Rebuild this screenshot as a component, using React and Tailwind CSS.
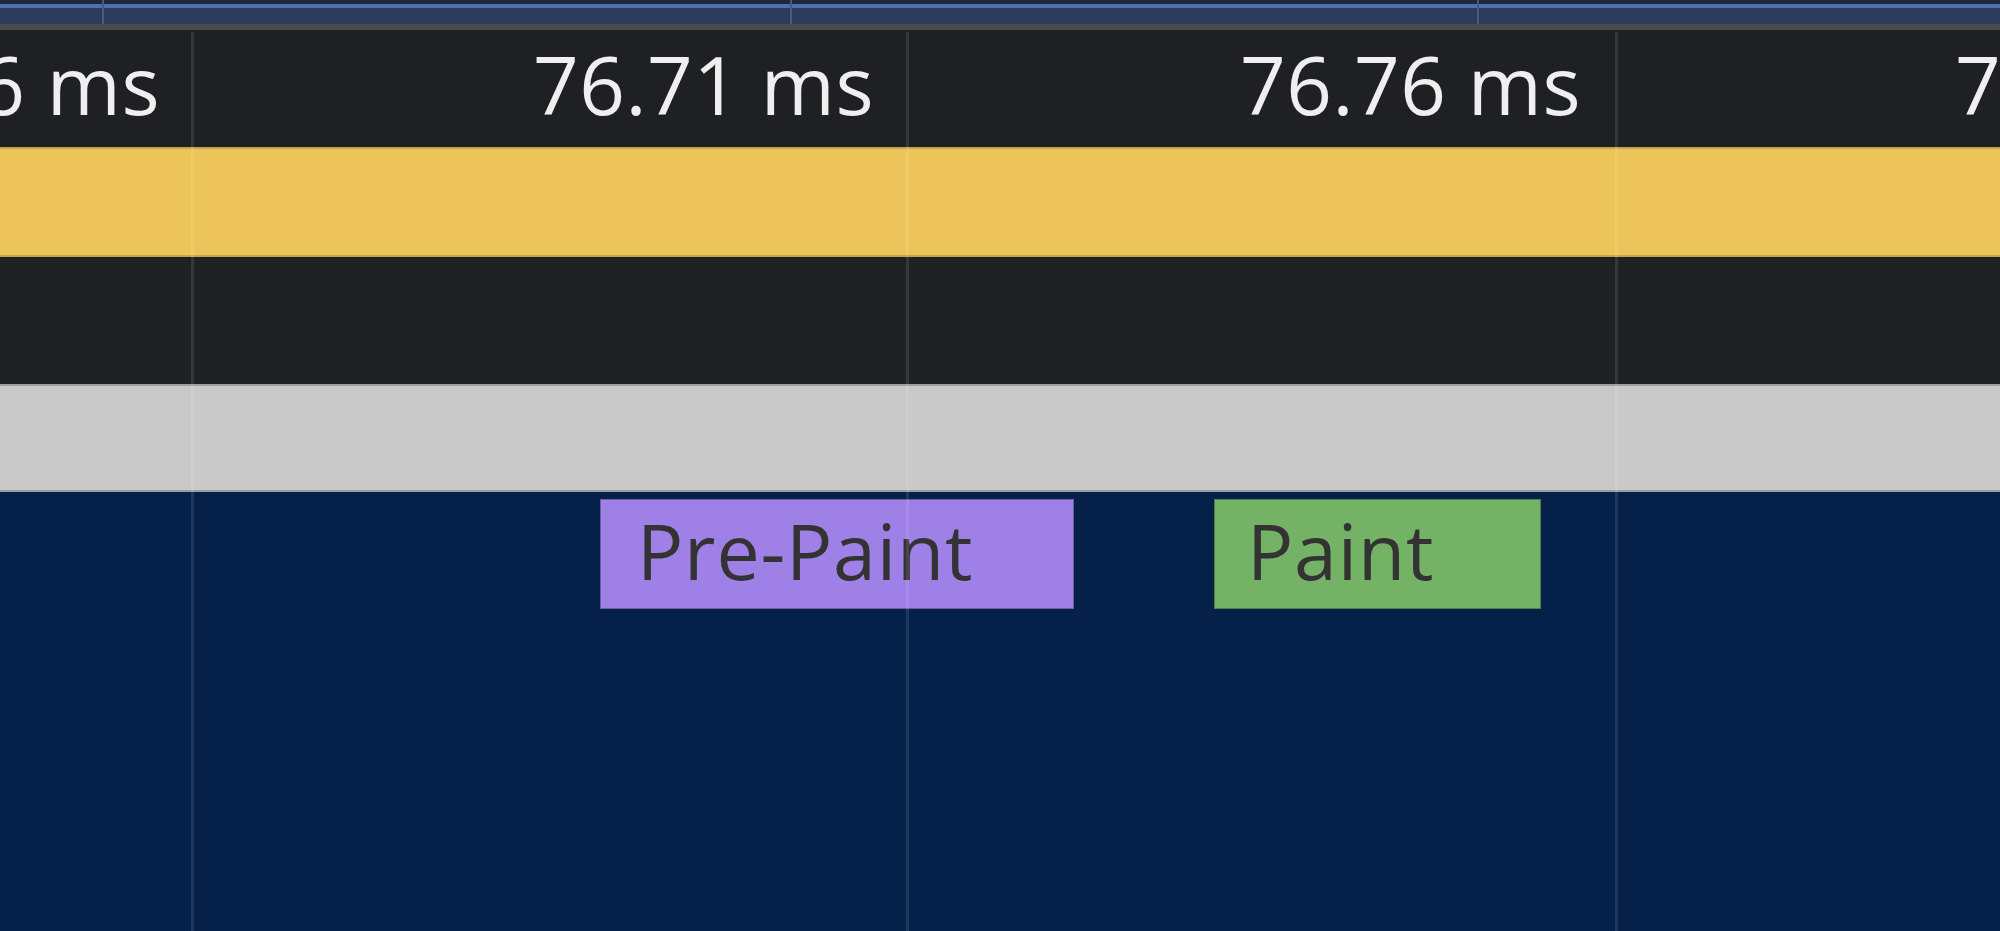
export default function App() {
  const font = { fontFamily: '"Open Sans", "Noto Sans", sans-serif' };
  return (
    <div className="relative w-[2000px] h-[931px] overflow-hidden bg-[#05214a]" style={font}>
      <div className="flex flex-col h-full">
        {/* overview strip */}
        <div className="relative h-[24px] bg-[#2c3b5b] shrink-0">
          <div className="h-[4px] bg-[#1f283d]" />
          <div className="h-[4px] bg-[#4b70b3]" />
          <div className="absolute inset-0 flex">
            <div className="w-[104px] shrink-0 border-r-[2px] border-[#4a5a7a]" />
            <div className="w-[688px] shrink-0 border-r-[2px] border-[#4a5a7a]" />
            <div className="w-[687px] shrink-0 border-r-[2px] border-[#4a5a7a]" />
          </div>
        </div>
        <div className="h-[6px] bg-[#4a4b4e] shrink-0" />
        {/* time header */}
        <div className="h-[117px] bg-[#1f2024] shrink-0 text-[#efeff0] text-[80px] leading-[80px] tracking-[0.5px] flex pt-[14px] whitespace-nowrap">
          <div className="w-[192px] shrink-0 flex justify-end pr-[32px]">76.66 ms</div>
          <div className="w-[715px] shrink-0 flex justify-end pr-[33px]">76.71 ms</div>
          <div className="w-[709px] shrink-0 flex justify-end pr-[35px]">76.76 ms</div>
          <div className="w-[709px] shrink-0 flex justify-end pr-[29px]">76.81 ms</div>
        </div>
        {/* yellow bar */}
        <div className="h-[110px] bg-[#ecc45a] border-y-[2px] border-[#c9a44a] shrink-0" />
        {/* dark row */}
        <div className="h-[127px] bg-[#202125] shrink-0" />
        {/* gray row */}
        <div className="h-[108px] bg-[#c9c9c9] border-y-[2px] border-[#9a9ca0] shrink-0" />
        {/* flame area (free canvas) */}
        <div className="relative flex-1 bg-[#05214a] text-[#333333] text-[77px] leading-[77px] tracking-[0.8px] whitespace-nowrap">
          <div className="absolute top-[7px] left-[600px] w-[474px] h-[110px] bg-[#9e80e6] border border-[#6f5aa8] pl-[36px] pt-[12px]">
            Pre-Paint
          </div>
          <div className="absolute top-[7px] left-[1214px] w-[327px] h-[110px] bg-[#74b266] border border-[#4f7f46] pl-[32px] pt-[12px]">
            Paint
          </div>
        </div>
      </div>
      {/* grid lines overlay */}
      <div className="pointer-events-none absolute top-[32px] bottom-0 left-0 right-0 flex">
        <div className="w-[191px] shrink-0" />
        <div className="w-[3px] shrink-0 bg-[rgba(255,255,255,0.1)]" />
        <div className="w-[712px] shrink-0" />
        <div className="w-[3px] shrink-0 bg-[rgba(255,255,255,0.1)]" />
        <div className="w-[706px] shrink-0" />
        <div className="w-[3px] shrink-0 bg-[rgba(255,255,255,0.1)]" />
      </div>
    </div>
  );
}
